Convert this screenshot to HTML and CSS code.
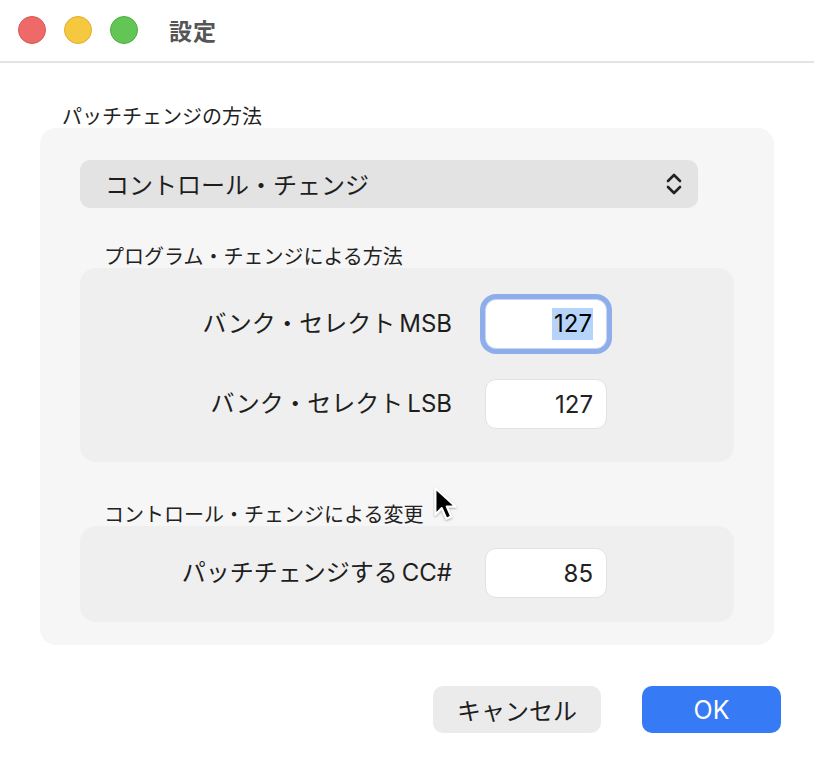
FILE: index.html
```html
<!DOCTYPE html>
<html lang="ja">
<head>
<meta charset="utf-8">
<title>設定</title>
<link rel="stylesheet" href="styles.css">
</head>
<body>
<div class="window">
  <header class="titlebar">
    <div class="lights">
      <span class="light red"></span>
      <span class="light yellow"></span>
      <span class="light green"></span>
    </div>
    <h1 class="title">設定</h1>
  </header>

  <main class="content">
    <div class="group-label top-label">パッチチェンジの方法</div>
    <section class="panel">
      <div class="popup">
        <span class="popup-text">コントロール・チェンジ</span>
        <svg class="chevrons" width="16" height="22" viewBox="0 0 16 22">
          <path d="M2 8 L8 2 L14 8" fill="none" stroke="#222" stroke-width="2.6" stroke-linecap="round" stroke-linejoin="round"/>
          <path d="M2 14 L8 20 L14 14" fill="none" stroke="#222" stroke-width="2.6" stroke-linecap="round" stroke-linejoin="round"/>
        </svg>
      </div>

      <div class="group-label sub-label first-sub">プログラム・チェンジによる方法</div>
      <div class="box box-program">
        <div class="row">
          <span class="row-label">バンク・セレクト<span class="latin">MSB</span></span>
          <div class="field focused"><span class="sel">127</span></div>
        </div>
        <div class="row">
          <span class="row-label">バンク・セレクト<span class="latin">LSB</span></span>
          <div class="field">127</div>
        </div>
      </div>

      <div class="group-label sub-label second-sub">コントロール・チェンジによる変更</div>
      <div class="box box-cc">
        <div class="row">
          <span class="row-label">パッチチェンジする<span class="latin">CC#</span></span>
          <div class="field">85</div>
        </div>
      </div>
    </section>

    <div class="buttons">
      <button class="btn cancel">キャンセル</button>
      <button class="btn ok">OK</button>
    </div>
  </main>

  <svg class="cursor" width="28" height="40" viewBox="0 0 26 38">
    <defs>
      <filter id="sh" x="-30%" y="-30%" width="160%" height="160%">
        <feDropShadow dx="0" dy="1" stdDeviation="1.2" flood-color="#000" flood-opacity="0.35"/>
      </filter>
    </defs>
    <path filter="url(#sh)" d="M2 2 L2 27 L8 21 L12.5 31 L17 29 L12.8 19.5 L21 19.5 Z" fill="#000" stroke="#fff" stroke-width="2" stroke-linejoin="round"/>
  </svg>
</div>
</body>
</html>
```

FILE: styles.css
```css
* {
  box-sizing: border-box;
}

html, body {
  margin: 0;
  padding: 0;
  background: #ffffff;
}

body {
  font-family: "Inter", "Noto Sans CJK JP", sans-serif;
  color: #222;
}

.window {
  position: relative;
  width: 814px;
  height: 766px;
  background: #fff;
  overflow: hidden;
}

.titlebar {
  height: 63px;
  display: flex;
  align-items: center;
  padding-left: 18px;
  padding-bottom: 1px;
  border-bottom: 2px solid #e4e4e4;
}

.lights {
  display: flex;
  gap: 18px;
}

.light {
  width: 28px;
  height: 28px;
  border-radius: 50%;
  display: block;
}

.red {
  background: #ee6a69;
  border: 1px solid #da5452;
}

.yellow {
  background: #f5c83f;
  border: 1px solid #dfae2a;
}

.green {
  background: #62c555;
  border: 1px solid #4cae3f;
}

.title {
  margin: 0 0 0 31px;
  font-family: "Noto Sans CJK JP", sans-serif;
  font-size: 23px;
  font-weight: 700;
  color: #555;
  line-height: 28px;
  letter-spacing: 1px;
}

.content {
  padding: 41px 33px 0 40px;
}

.group-label {
  font-family: "Noto Sans CJK JP", sans-serif;
  font-size: 20px;
  line-height: 24px;
  color: #222;
}

.top-label {
  margin-left: 22px;
}

.panel {
  width: 734px;
  background: #f6f6f6;
  border-radius: 16px;
  padding: 32px 40px 23px 40px;
}

.popup {
  width: 618px;
  height: 48px;
  background: #e3e3e3;
  border-radius: 10px;
  display: flex;
  align-items: center;
  justify-content: space-between;
  padding: 0 16px 0 25px;
}

.popup-text {
  font-family: "Noto Sans CJK JP", sans-serif;
  font-size: 24px;
  line-height: 30px;
  color: #1e1e1e;
}

.chevrons {
  display: block;
}

.sub-label {
  margin-left: 24px;
}

.first-sub {
  margin-top: 36px;
}

.second-sub {
  margin-top: 40px;
}

.box {
  background: #efefef;
  border-radius: 16px;
  display: flex;
  flex-direction: column;
  gap: 30px;
}

.box-program {
  padding: 31px 0 33px 0;
}

.box-cc {
  padding: 22px 0 24px 0;
}

.row {
  display: grid;
  grid-template-columns: 372px 122px;
  column-gap: 33px;
  align-items: center;
}

.row-label {
  text-align: right;
  font-size: 24px;
  line-height: 30px;
  color: #1e1e1e;
}

.latin {
  margin-left: 4px;
}

.field {
  height: 50px;
  background: #fff;
  border: 1px solid #e2e2e2;
  border-radius: 11px;
  display: flex;
  align-items: center;
  justify-content: flex-end;
  padding-right: 13px;
  font-size: 24px;
  color: #222;
}

.field.focused {
  border-color: #c9d6f0;
  box-shadow: 0 0 0 5px #8eaeeb;
  color: #000;
}

.sel {
  background: #b6d4fa;
  line-height: 32px;
  padding: 0 1px 0 2px;
}

.buttons {
  display: flex;
  justify-content: flex-end;
  gap: 41px;
  margin-top: 41px;
}

.btn {
  height: 47px;
  border: none;
  border-radius: 10px;
  font-family: "Inter", "Noto Sans CJK JP", sans-serif;
  font-size: 24px;
  padding: 0;
}

.cancel {
  width: 168px;
  background: #ebebeb;
  color: #1e1e1e;
}

.ok {
  width: 139px;
  background: #367af6;
  color: #fff;
  font-size: 25px;
}

.cursor {
  position: absolute;
  left: 433px;
  top: 486px;
}
```
